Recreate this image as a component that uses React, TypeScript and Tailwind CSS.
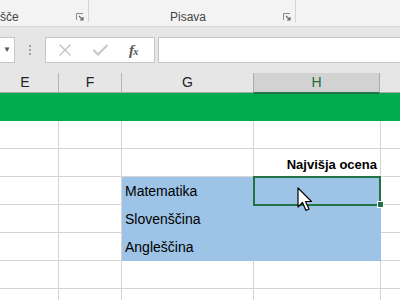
const font = { fontFamily: '"Liberation Sans", Arial, sans-serif' };

const Launcher = () => (
  <svg width="8" height="8" viewBox="0 0 8 8" aria-hidden="true" className="mb-[1px]">
    <path d="M0.5 7V0.5H7" fill="none" stroke="#8a8a8a" strokeWidth="1" />
    <path d="M3 3L7 7M7 4V7H4" fill="none" stroke="#6a6a6a" strokeWidth="1.2" />
  </svg>
);

const Cursor = () => (
  <svg width="18" height="26" viewBox="0 0 18 26" aria-hidden="true">
    <path
      d="M1 1V20L5.5 15.5L9 23.5L12 22L8.5 14.5H14.5Z"
      fill="#fff"
      stroke="#000"
      strokeWidth="1.2"
      strokeLinejoin="round"
    />
  </svg>
);

// širine stolpcev E..I (E se začne levo izven zaslona)
const cols = [
  { key: "E", w: "w-[67px] -ml-[8px]" },
  { key: "F", w: "w-[63px]" },
  { key: "G", w: "w-[132px]" },
  { key: "H", w: "w-[127px]" },
  { key: "", w: "w-[80px]" },
];

const rows = [
  { g: "", h: "", fill: false },
  { g: "", h: "Najvišja ocena", fill: false },
  { g: "Matematika", h: "", fill: true, sel: true },
  { g: "Slovenščina", h: "", fill: true },
  { g: "Angleščina", h: "", fill: true },
  { g: "", h: "", fill: false },
  { g: "", h: "", fill: false },
];

export default function App() {
  return (
    <div className="w-[400px] h-[300px] overflow-hidden bg-white relative" style={font}>
      {/* ribbon */}
      <div className="flex h-[27px] bg-[#f3f3f3] border-b border-[#d4d4d4] text-[12px] text-[#444]">
        <div className="w-[89px] shrink-0 h-[22px] border-r border-[#d4d4d4] flex items-end justify-between pr-[4px]">
          <span className="leading-[9px]">šče</span>
          <Launcher />
        </div>
        <div className="w-[207px] shrink-0 h-[22px] border-r border-[#d4d4d4] flex items-end pr-[4px]">
          <span className="flex-1 text-center leading-[9px] pl-[4px]">Pisava</span>
          <Launcher />
        </div>
      </div>

      {/* formula bar */}
      <div className="h-[46px] bg-[#e6e6e6] flex items-start pt-[10px]">
        <div className="w-[15px] shrink-0 h-[26px] bg-white border border-l-0 border-[#c6c6c6] flex items-center justify-center text-[8px] text-[#555]">
          ▼
        </div>
        <div className="w-[30px] shrink-0 h-[26px] flex flex-col items-center justify-center gap-[2px]">
          <span className="w-[2px] h-[2px] bg-[#a3a3a3]" />
          <span className="w-[2px] h-[2px] bg-[#a3a3a3]" />
          <span className="w-[2px] h-[2px] bg-[#a3a3a3]" />
        </div>
        <div className="w-[110px] shrink-0 h-[26px] bg-white border border-[#c6c6c6] flex items-center">
          <svg width="14" height="14" viewBox="0 0 14 14" className="ml-[12px]" aria-hidden="true">
            <path d="M1.5 1.5L12.5 12.5M12.5 1.5L1.5 12.5" stroke="#c3c3c3" strokeWidth="1.4" />
          </svg>
          <svg width="17" height="14" viewBox="0 0 17 14" className="ml-[20px]" aria-hidden="true">
            <path d="M1.5 7L6 11.5L15.5 2" fill="none" stroke="#c8c8c8" strokeWidth="2.2" />
          </svg>
          <span
            className="ml-[20px] text-[15px] italic font-bold text-[#555] tracking-[-1px]"
            style={{ fontFamily: '"Liberation Serif", "Times New Roman", serif' }}
          >
            f<span className="text-[11px]">x</span>
          </span>
        </div>
        <div className="ml-[3px] flex-1 h-[26px] bg-white border border-r-0 border-[#c6c6c6]" />
      </div>

      {/* column headers */}
      <div className="flex h-[20px] bg-[#e6e6e6] border-b border-[#ababab] text-[14px] text-[#222]">
        {cols.map((c) =>
          c.key === "H" ? (
            <div
              key={c.key}
              className={`${c.w} shrink-0 -ml-[1px] h-[21px] bg-[#d2d2d2] border-x border-[#ababab] border-b-2 border-b-[#217346] flex items-center justify-center text-[#1d6b40]`}
            >
              {c.key}
            </div>
          ) : (
            <div
              key={c.key || "I"}
              className={`${c.w} shrink-0 border-r border-[#b5b5b5] flex items-center justify-center`}
            >
              {c.key}
            </div>
          ),
        )}
      </div>

      {/* green row */}
      <div className="h-[28px] bg-[#00ac4e]" />

      {/* cells */}
      {rows.map((r, i) => (
        <div key={i} className="flex h-[28px] text-[14px] text-black">
          <div className="w-[67px] shrink-0 -ml-[8px] border-r border-b border-[#d4d4d4]" />
          <div className="w-[63px] shrink-0 border-r border-b border-[#d4d4d4]" />
          <div
            className={`w-[132px] shrink-0 border-b border-r flex items-end pl-[3px] pb-[2px] ${
              r.fill ? "bg-[#9dc3e6] border-[#9dc3e6]" : "border-[#d4d4d4]"
            }`}
          >
            {r.g}
          </div>
          <div
            className={`w-[127px] shrink-0 border-b border-r flex items-end justify-end pr-[3px] pb-[2px] relative ${
              r.fill ? "bg-[#9dc3e6] border-[#9dc3e6]" : "border-[#d4d4d4]"
            }`}
          >
            {r.h && <span className="font-bold text-[13px]">{r.h}</span>}
            {r.sel && (
              <>
                <div className="absolute z-10 -left-[1px] -top-[1px] w-[128px] h-[30px] border-2 border-[#217346]" />
                <div className="absolute z-10 -right-[4px] -bottom-[4px] w-[7px] h-[7px] bg-[#217346] border border-white" />
              </>
            )}
          </div>
          <div className="w-[80px] shrink-0 border-b border-[#d4d4d4]" />
        </div>
      ))}

      <div className="absolute z-20 left-[297px] top-[187px]">
        <Cursor />
      </div>
    </div>
  );
}
